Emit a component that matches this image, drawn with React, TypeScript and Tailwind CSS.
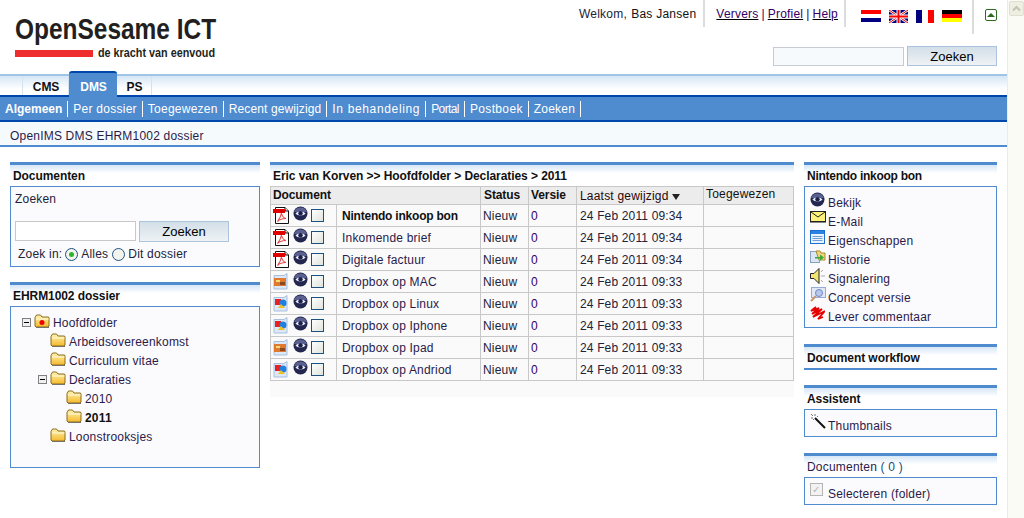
import { ReactNode } from 'react'

const navItems = [
  { label: 'Per dossier', cls: 'tracking-[0.25px]' },
  { label: 'Toegewezen', cls: 'tracking-[0.25px]' },
  { label: 'Recent gewijzigd', cls: 'tracking-[0.12px]' },
  { label: 'In behandeling', cls: 'tracking-[0.65px]' },
  { label: 'Portal', cls: 'tracking-[-0.6px]' },
  { label: 'Postboek', cls: 'tracking-[0.35px]' },
  { label: 'Zoeken', cls: 'tracking-[0.2px]' },
]

const rows = [
  { icon: 'pdf', name: 'Nintendo inkoop bon', time: '09:34', active: true },
  { icon: 'pdf', name: 'Inkomende brief', time: '09:34' },
  { icon: 'pdf', name: 'Digitale factuur', time: '09:34' },
  { icon: 'img', name: 'Dropbox op MAC', time: '09:33' },
  { icon: 'vis', name: 'Dropbox op Linux', time: '09:33' },
  { icon: 'vis', name: 'Dropbox op Iphone', time: '09:33' },
  { icon: 'img', name: 'Dropbox op Ipad', time: '09:33' },
  { icon: 'vis', name: 'Dropbox op Andriod', time: '09:33' },
]

const tree = [
  { label: 'Hoofdfolder', indent: 'pl-[11px]', toggle: true, root: true },
  { label: 'Arbeidsovereenkomst', indent: 'pl-[39px]' },
  { label: 'Curriculum vitae', indent: 'pl-[39px]' },
  { label: 'Declaraties', indent: 'pl-[27px]', toggle: true },
  { label: '2010', indent: 'pl-[55px]' },
  { label: '2011', indent: 'pl-[55px]', bold: true },
  { label: 'Loonstrooksjes', indent: 'pl-[39px]' },
]

function Eye() {
  return (
    <svg width="15" height="15" viewBox="0 0 15 15" className="shrink-0">
      <circle cx="7.5" cy="7.5" r="7" fill="#23264f" />
      <path d="M1 6a7 7 0 0 1 13 0z" fill="#5a6090" />
      <path d="M2.500 7.500C4 4.800 11 4.800 12.500 7.500 11 10 4 10 2.500 7.500z" fill="#e8ecf8" />
      <circle cx="7.5" cy="7.3" r="2.2" fill="#1c2048" />
    </svg>
  )
}

function PdfIcon() {
  return (
    <svg width="16" height="17" viewBox="0 0 16 17" className="shrink-0">
      <path d="M2.500.5H12l3.500 3.500v12.500h-13z" fill="#fff" stroke="#111" />
      <path d="M12 .5V4h3.500" fill="#ddd" stroke="#111" />
      <rect x="0" y="2" width="12" height="4" fill="#e00000" />
      <path d="M8.500 6c-.5 3-2 6-4 8.500 2.500-2.500 5-3 8.500-3-2-.5-4-3-4.500-5.500z" fill="none" stroke="#e05050" strokeWidth="1.200" />
    </svg>
  )
}

function ImgIcon({ kind }: { kind: string }) {
  return (
    <svg width="16" height="17" viewBox="0 0 16 17" className="shrink-0">
      <path d="M1 2.500h10l3-2v15.500H1z" fill="#dce8f6" stroke="#a8c0e0" />
      {kind === 'img' ? (
        <>
          <rect x="1" y="5" width="12" height="8" fill="#e07a30" />
          <rect x="3" y="7" width="4" height="2" fill="#f8e070" />
          <rect x="7" y="9" width="5" height="3" fill="#8a4a20" />
        </>
      ) : (
        <>
          <rect x="2" y="4" width="6" height="6" fill="#e82020" />
          <circle cx="10" cy="8" r="3.500" fill="#2080e0" />
          <path d="M5 13l3-4 4 4z" fill="#f0c020" />
        </>
      )}
    </svg>
  )
}

function Checkbox() {
  return <span className="block h-[13px] w-[13px] shrink-0 border border-[#1c5180] bg-gradient-to-br from-white to-[#dfe3dc]" />
}

function Folder({ dot = false }: { dot?: boolean }) {
  return (
    <svg width="16" height="14" viewBox="0 0 16 14" className="shrink-0">
      <defs>
        <linearGradient id="folderFill" x1="0" y1="0" x2="0" y2="1">
          <stop offset="0" stopColor="#fff3b0" />
          <stop offset="1" stopColor="#f5b92c" />
        </linearGradient>
      </defs>
      <path d="M1 3.500 2.500 1h4L8 3h6.500l.5 1v8l-1 1H2l-1-1z" fill="url(#folderFill)" stroke="#8a6d1c" />
      <path d="M2 5h12.500" stroke="#fffbe0" />
      <path d="M2 13.500h13" stroke="#77736a" />
      {dot && <circle cx="8" cy="8.500" r="2.500" fill="#ee0000" />}
    </svg>
  )
}

function Toggle() {
  return (
    <span className="mr-[3px] flex h-[9px] w-[9px] shrink-0 items-center justify-center border border-[#808080] bg-[#f0f0f0]">
      <span className="h-px w-[5px] bg-black" />
    </span>
  )
}

function ActionIcon({ name }: { name: string }) {
  if (name === 'mail') {
    return (
      <svg width="16" height="12" viewBox="0 0 16 12">
        <rect x=".5" y=".5" width="15" height="10" fill="#fff27a" stroke="#222" />
        <path d="M1 1l7 5 7-5" fill="none" stroke="#222" />
        <path d="M0 11.500h16" stroke="#888" />
      </svg>
    )
  }
  if (name === 'props') {
    return (
      <svg width="15" height="14" viewBox="0 0 15 14">
        <rect x=".5" y=".5" width="14" height="13" fill="#eaf3ff" stroke="#1f6fd0" />
        <rect x="1" y="1" width="13" height="3" fill="#2a82e4" />
        <path d="M2.500 6.500h10M2.500 8.500h10M2.500 10.500h10" stroke="#6f9fd8" />
      </svg>
    )
  }
  if (name === 'history') {
    return (
      <svg width="16" height="14" viewBox="0 0 16 14">
        <rect x=".5" y="2.500" width="9" height="11" fill="#dbe6f4" stroke="#8aa0c0" />
        <path d="M6 2h4l1 2h4v7H9z" fill="#f2d77a" stroke="#a88a30" />
        <path d="M5 8h5V5.500L14 8.500 10 11.500V9.500H5z" fill="#3aa83a" />
      </svg>
    )
  }
  if (name === 'sound') {
    return (
      <svg width="16" height="16" viewBox="0 0 16 16">
        <path d="M.5 5.500H4L9 .5v15l-5-5H.5z" fill="#f2e470" stroke="#222" />
        <path d="M11 4l2-2M11 8h4M11 12l2 2" stroke="#aaa" />
      </svg>
    )
  }
  if (name === 'concept') {
    return (
      <svg width="16" height="15" viewBox="0 0 16 15">
        <rect x="1.500" y=".5" width="14" height="10" fill="#e0e8f8" stroke="#98aad8" />
        <circle cx="9" cy="6" r="3.500" fill="#b8c8ec" stroke="#7488c0" />
        <path d="M6 9l-5 5" stroke="#c89868" strokeWidth="2" />
      </svg>
    )
  }
  if (name === 'comment') {
    return (
      <svg width="15" height="15" viewBox="0 0 15 15">
        <path d="M6 1L1 5l8-3-7 6 10-5-9 8 12-6-7 8 5-2" stroke="#e60000" strokeWidth="1.800" fill="none" />
      </svg>
    )
  }
  return <Eye />
}

function FlagNl() {
  return (
    <span className="flex h-3 w-5 flex-col">
      <span className="h-1 bg-[#ff0000]" />
      <span className="h-1 bg-white" />
      <span className="h-1 bg-[#000080]" />
    </span>
  )
}

function FlagUk() {
  return (
    <svg width="19" height="13" viewBox="0 0 19 13">
      <rect width="19" height="13" fill="#000080" />
      <path d="M0 0l19 13M19 0 0 13" stroke="#fff" strokeWidth="2.500" />
      <path d="M0 0l19 13M19 0 0 13" stroke="#e00000" />
      <path d="M9.500 0v13M0 6.500h19" stroke="#fff" strokeWidth="4" />
      <path d="M9.500 0v13M0 6.500h19" stroke="#ff0000" strokeWidth="2" />
    </svg>
  )
}

function FlagFr() {
  return (
    <span className="flex h-[13px] w-[18px]">
      <span className="w-1.5 bg-[#000080]" />
      <span className="w-1.5 bg-white" />
      <span className="w-1.5 bg-[#ff0000]" />
    </span>
  )
}

function FlagDe() {
  return (
    <span className="flex h-3 w-5 flex-col">
      <span className="h-1 bg-black" />
      <span className="h-1 bg-[#ff0000]" />
      <span className="h-1 bg-[#ffff00]" />
    </span>
  )
}

function SearchButton({ className }: { className: string }) {
  return (
    <button
      className={`border border-[#a9c4dc] bg-gradient-to-b from-[#d3dfe8] to-[#eef2f5] text-[13px] leading-none tracking-normal text-black ${className}`}
    >
      Zoeken
    </button>
  )
}

function PanelHead({ children }: { children: ReactNode }) {
  return (
    <div className="h-[24px] border-t-[3px] border-[#4f8bcf] bg-gradient-to-b from-[#d6e6f5] to-white to-40% pt-[4px] pl-[3px] text-[12px] leading-[14px] font-bold tracking-[-0.07px] text-[#111]">
      {children}
    </div>
  )
}

function Box({ className = '', children }: { className?: string; children: ReactNode }) {
  return <div className={`border border-[#4f8bcf] bg-[#fbfbfd] ${className}`}>{children}</div>
}

const actions = [
  ['eye', 'Bekijk'],
  ['mail', 'E-Mail'],
  ['props', 'Eigenschappen'],
  ['history', 'Historie'],
  ['sound', 'Signalering'],
  ['concept', 'Concept versie'],
  ['comment', 'Lever commentaar'],
]

const cell = 'border border-[#c8c8c8] align-middle'

export default function App() {
  return (
    <div className="flex h-[518px] w-[1024px] overflow-hidden bg-white font-['Liberation_Sans',Arial,sans-serif] text-[12px] tracking-[0.2px] text-[#222238]">
      <div className="w-[1007px] shrink-0">
        <header className="flex h-[74px] justify-between">
          <div className="pt-[12px] pl-[15px]">
            <div className="origin-left scale-x-[0.815] text-[30px] leading-[34px] font-bold tracking-normal whitespace-nowrap text-[#231f20]">
              OpenSesame ICT
            </div>
            <div className="flex items-center">
              <span className="h-[7px] w-[78px] bg-[#ee2e2e]" />
              <span className="ml-[5px] origin-left scale-x-[0.9] text-[12px] leading-[14px] font-bold tracking-normal whitespace-nowrap text-[#231f20]">
                de kracht van eenvoud
              </span>
            </div>
          </div>

          <div className="flex flex-col items-end pr-[10px]">
            <div className="flex h-[34px] items-start">
              <div className="flex h-[27px] items-center border-r-2 border-[#dcdcdc] pr-[7px] tracking-[0.25px]">
                Welkom, <span className="ml-1 text-[#111]">Bas Jansen</span>
              </div>
              <div className="flex h-[27px] items-center gap-[3px] border-r-2 border-[#dcdcdc] pr-[6px] pl-[11px] text-[#330066]">
                <a className="underline decoration-black">Ververs</a>|<a className="underline decoration-black">Profiel</a>|
                <a className="underline decoration-black">Help</a>
              </div>
              <div className="flex h-[34px] items-start gap-[8px] border-r-2 border-[#dcdcdc] pt-[10px] pr-[10px] pl-[15px]">
                <FlagNl />
                <FlagUk />
                <FlagFr />
                <FlagDe />
              </div>
              <div className="pt-[9px] pl-[11px]">
                <span className="flex h-[12px] w-[12px] items-center justify-center rounded-[2px] border border-[#2f6b1f] bg-white">
                  <span className="h-0 w-0 border-x-[4px] border-b-[4px] border-x-transparent border-b-[#2f6b1f]" />
                </span>
              </div>
            </div>
            <div className="mt-[12px] flex items-start gap-[3px]">
              <input className="mt-px h-[19px] w-[131px] border border-[#c6ccd2] bg-[#f7fafd]" />
              <SearchButton className="h-[20px] w-[90px]" />
            </div>
          </div>
        </header>

        <div className="flex h-[21px] border-t-2 border-[#9fc5e6] bg-gradient-to-b from-[#d6e6f5] to-white to-70% pl-[22px] text-[12px] font-bold tracking-[-0.1px] text-[#111]">
          <span className="flex w-[47px] items-center justify-center border-x border-[#d3e3f0] pt-[2px] pl-[1px]">CMS</span>
          <span className="-mt-[5px] flex h-[26px] w-[48px] items-center justify-center rounded-t-[3px] border-t-2 border-[#0047ab] bg-[#4f8bcf] pt-[3px] pl-[1px] text-white">
            DMS
          </span>
          <span className="flex w-[35px] items-center justify-center border-r border-[#d3e3f0] pt-[2px] pl-[1px]">PS</span>
        </div>

        <nav className="flex h-[27px] items-center border-y-2 border-[#0047ab] bg-[#4f8bcf] text-white">
          <span className="border-r border-white px-[5px] leading-[16px] font-bold tracking-normal">Algemeen</span>
          {navItems.map((item) => (
            <span key={item.label} className={`border-r border-white px-[5px] leading-[16px] ${item.cls}`}>
              {item.label}
            </span>
          ))}
        </nav>

        <div className="h-[25px] border-b-2 border-[#4f8bcf] bg-[#f5fafd] pt-[7px] pl-[10px] leading-[14px] text-[#2a1a4a]">
          OpenIMS DMS EHRM1002 dossier
        </div>

        <main className="flex gap-[10px] px-[10px] pt-[15px]">
          <aside className="w-[250px] shrink-0">
            <PanelHead>Documenten</PanelHead>
            <Box className="h-[81px] pt-[5px] pl-[4px]">
              <div className="leading-[14px]">Zoeken</div>
              <div className="mt-[15px] flex items-start gap-[3px]">
                <input className="h-[20px] w-[121px] border border-[#c8c8c8] bg-white" />
                <SearchButton className="h-[21px] w-[90px]" />
              </div>
              <div className="mt-[5px] flex items-center pl-[3px] leading-[14px]">
                Zoek in:
                <span className="ml-[3px] flex h-[13px] w-[13px] items-center justify-center rounded-full border border-[#1c5180] bg-[#f4f4ee]">
                  <span className="h-[5px] w-[5px] rounded-full bg-[#2fb32f]" />
                </span>
                <span className="ml-[3px]">Alles</span>
                <span className="ml-[4px] h-[13px] w-[13px] rounded-full border border-[#1c5180] bg-[#f4f4ee]" />
                <span className="ml-[3px]">Dit dossier</span>
              </div>
            </Box>

            <div className="mt-[15px]">
              <PanelHead>EHRM1002 dossier</PanelHead>
              <Box className="h-[162px] pt-[6px]">
                {tree.map((node) => (
                  <div key={node.label} className={`flex h-[19px] items-center ${node.indent}`}>
                    {node.toggle && <Toggle />}
                    <span className="-mt-[3px]">
                      <Folder dot={node.root} />
                    </span>
                    <span className={`ml-[3px] ${node.bold ? 'font-bold text-[#111]' : 'text-[#2a1a4a]'}`}>{node.label}</span>
                  </div>
                ))}
              </Box>
            </div>
          </aside>

          <section className="w-[524px] shrink-0">
            <PanelHead>Eric van Korven &gt;&gt; Hoofdfolder &gt; Declaraties &gt; 2011</PanelHead>
            <div className="h-[211px] bg-[#fafafa]">
              <table className="w-[523px] table-fixed border-collapse">
                <colgroup>
                  <col className="w-[66px]" />
                  <col className="w-[144px]" />
                  <col className="w-[48px]" />
                  <col className="w-[48px]" />
                  <col className="w-[127px]" />
                  <col className="w-[90px]" />
                </colgroup>
                <thead>
                  <tr className="h-[18px] bg-[#ececec] text-left leading-[15px] tracking-[-0.1px] text-[#111]">
                    <th colSpan={2} className={`${cell} pl-[2px]`}>
                      Document
                    </th>
                    <th className={`${cell} pl-[3px]`}>Status</th>
                    <th className={`${cell} pl-[2px]`}>Versie</th>
                    <th className={`${cell} pl-[3px] font-normal tracking-[0.2px] text-[#2a0808]`}>
                      <span className="flex items-center pt-px">
                        Laatst gewijzigd
                        <span className="mt-px ml-[3px] h-0 w-0 border-x-[4px] border-t-[6px] border-x-transparent border-t-[#222]" />
                      </span>
                    </th>
                    <th className={`${cell} pl-[2px] align-top font-normal tracking-[0.2px]`}>Toegewezen</th>
                  </tr>
                </thead>
                <tbody>
                  {rows.map((row) => (
                    <tr key={row.name} className="h-[22px]">
                      <td className={`${cell} pl-[2px]`}>
                        <div className="flex items-center gap-[4px]">
                          {row.icon === 'pdf' ? <PdfIcon /> : <ImgIcon kind={row.icon} />}
                          <span className="-mt-[4px]">
                            <Eye />
                          </span>
                          <span className="-ml-[1px]">
                            <Checkbox />
                          </span>
                        </div>
                      </td>
                      <td
                        className={`${cell} pl-[5px] ${
                          row.active ? 'font-bold tracking-[-0.22px] text-[#111]' : 'text-[#2a1a4a]'
                        }`}
                      >
                        {row.name}
                      </td>
                      <td className={`${cell} pl-[2px]`}>Nieuw</td>
                      <td className={`${cell} pl-[2px] text-[#330066]`}>0</td>
                      <td className={`${cell} pl-[3px] tracking-[0.15px]`}>24 Feb 2011 {row.time}</td>
                      <td className={cell} />
                    </tr>
                  ))}
                </tbody>
              </table>
            </div>
          </section>

          <aside className="w-[193px] shrink-0">
            <PanelHead>
              <span className="tracking-[-0.27px]">Nintendo inkoop bon</span>
            </PanelHead>
            <Box className="h-[142px] pt-[5px] pl-[5px]">
              {actions.map(([icon, label]) => (
                <div key={label} className="flex h-[19px] items-start text-[#2a1a4a]">
                  <span className="flex w-[18px] shrink-0 justify-start">
                    <ActionIcon name={icon} />
                  </span>
                  <span className="mt-[4px] leading-[14px]">{label}</span>
                </div>
              ))}
            </Box>

            <div className="mt-[16px] border-b-2 border-[#4f8bcf]">
              <PanelHead>Document workflow</PanelHead>
            </div>

            <div className="mt-[15px]">
              <PanelHead>Assistent</PanelHead>
              <Box className="flex h-[28px] items-start pt-[3px] pl-[5px] text-[#2a1a4a]">
                <svg width="16" height="16" viewBox="0 0 16 16" className="mr-[2px] shrink-0">
                  <path d="M5 5l10 10" stroke="#111" strokeWidth="2" />
                  <path d="M1 1l2 2M5 1v2M1 5h2M8 3l-1 1M3 7l1-1" stroke="#777" />
                </svg>
                <span className="mt-[6px] leading-[14px]">Thumbnails</span>
              </Box>
            </div>

            <div className="mt-[16px]">
              <div className="h-[24px] border-t-[3px] border-[#4f8bcf] bg-gradient-to-b from-[#d6e6f5] to-white to-40% pt-[4px] pl-[3px] leading-[14px] text-[#2a1a4a]">
                Documenten <span className="text-[#1a4a7a]">( 0 )</span>
              </div>
              <Box className="flex h-[28px] items-start pt-[5px] pl-[5px] text-[#2a1a4a]">
                <span className="flex h-[13px] w-[13px] shrink-0 items-center justify-center border border-[#b5b5b5] bg-[#f2f2f2] text-[10px] leading-none text-[#b5b5b5]">
                  ✓
                </span>
                <span className="mt-[4px] ml-[5px] leading-[14px]">Selecteren (folder)</span>
              </Box>
            </div>
          </aside>
        </main>
      </div>

      <div className="w-[17px] shrink-0 border-l border-[#ececE4] bg-[#fbfbf6] pt-px pl-px">
        <div className="flex h-[15px] w-[15px] items-center justify-center rounded-[2px] border border-[#e0dfd2] bg-[#eeeee2] text-[#c4c3b4]">
          <svg width="9" height="7" viewBox="0 0 9 7">
            <path d="M1 5.500l3.500-3.500L8 5.500" fill="none" stroke="currentColor" strokeWidth="2" />
          </svg>
        </div>
      </div>
    </div>
  )
}
